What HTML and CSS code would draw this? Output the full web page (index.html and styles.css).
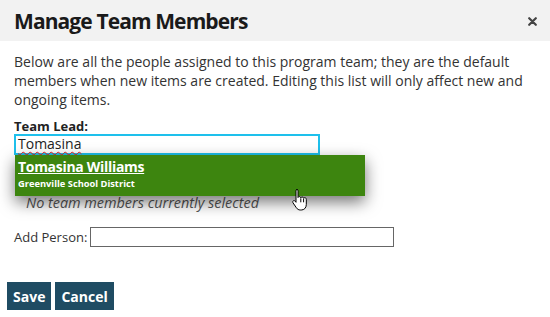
FILE: index.html
```html
<!DOCTYPE html>
<html>
	<head>
		<meta charset="UTF-8">
		<title>Manage Team Members</title>
		<link rel="stylesheet" href="styles.css">
	</head>
	<body>
		<div class="dialog">
			<div class="dialog_head">
				<h1>Manage Team Members</h1>
				<svg class="close" width="9" height="9" viewBox="0 0 9 9">
					<path d="M1.2 1.2l6.6 6.6M7.8 1.2L1.2 7.8" stroke="#444" stroke-width="2.2" stroke-linecap="round"/>
				</svg>
			</div>
			<div class="dialog_body">
				<p class="intro">Below are all the people assigned to this program team; they are the default members when new items are created. Editing this list will only affect new and ongoing items.</p>
				<div class="lead_box">
					<label class="lead_label">Team Lead:</label>
					<div class="lead_input"><span class="misspelled">Tomasina</span></div>
					<div class="suggest">
						<a class="suggest_name">Tomasina Williams</a>
						<span class="suggest_org">Greenville School District</span>
					</div>
					<svg class="cursor" width="16" height="24" viewBox="0 0 16 24">
						<path d="M4.5 1.5c1 0 1.5.7 1.5 1.6v6.4c.3-.6.8-.9 1.4-.9.8 0 1.3.5 1.4 1.2.3-.5.8-.8 1.4-.8.8 0 1.3.6 1.4 1.3.3-.4.7-.6 1.2-.6.9 0 1.5.7 1.5 1.7v5.2c0 3.2-2.1 5.4-5 5.4H8.4c-1.8 0-3-.8-4-2.2L1 14.8c-.5-.8-.3-1.6.3-2 .6-.4 1.4-.2 1.9.4l.8 1.1V3.1c0-.9.5-1.6 1.5-1.6z" fill="#fff" stroke="#000" stroke-width="1"/>
						<path d="M8.8 10.3v4M11.6 10.8v3.5" stroke="#000" stroke-width="1"/>
					</svg>
				</div>
				<p class="empty">No team members currently selected</p>
				<div class="add_box">
					<label for="add">Add Person:</label>
					<input type="text" id="add" class="add_input">
				</div>
				<div class="buttons">
					<button class="button">Save</button>
					<button class="button">Cancel</button>
				</div>
			</div>
		</div>
	</body>
</html>
```

FILE: styles.css
```css
body {
	margin: 0;
	font-family: "Open Sans", "DejaVu Sans", sans-serif;
	color: #333;
	background: #fff;
}

.dialog_head {
	display: flex;
	align-items: center;
	justify-content: space-between;
	height: 41px;
	padding: 0 13px 0 14px;
	background-color: #f2f2f2;
}

.dialog_head h1 {
	margin: 0;
	font-size: 21px;
	font-weight: bold;
	letter-spacing: -0.9px;
	color: #1a1a1a;
}

.close {
	display: block;
	margin-top: 1px;
}

.dialog_body {
	padding: 11px 14px 0 14px;
}

.intro {
	margin: 0;
	font-size: 14px;
	line-height: 19px;
}

.lead_box {
	position: relative;
	margin-top: 9px;
}

.lead_label {
	display: block;
	font-size: 13px;
	font-weight: bold;
	color: #222;
	line-height: 16px;
}

.lead_input {
	box-sizing: border-box;
	width: 306px;
	height: 21px;
	padding: 0 2px;
	border: 2px solid #1ec0ec;
	font-size: 14px;
	line-height: 16px;
	color: #222;
}

.misspelled {
	text-decoration-line: underline;
	text-decoration-style: wavy;
	text-decoration-color: #e02020;
	text-decoration-thickness: 1px;
	text-underline-offset: 2px;
}

.suggest {
	position: absolute;
	top: 37px;
	left: 1px;
	width: 350px;
	height: 41px;
	padding: 2px 3px;
	box-sizing: border-box;
	background-color: #3d850f;
	color: #fff;
	box-shadow: 0 6px 16px rgba(0, 0, 0, 0.55);
	z-index: 2;
}

.suggest_name {
	display: block;
	font-size: 14px;
	font-weight: bold;
	letter-spacing: -0.3px;
	line-height: 20px;
	text-decoration: underline;
}

.suggest_org {
	display: block;
	font-size: 9.3px;
	font-weight: bold;
	line-height: 14px;
}

.cursor {
	position: absolute;
	top: 70px;
	left: 278px;
	z-index: 3;
}

.empty {
	margin: 38px 0 0 12px;
	font-size: 14.4px;
	font-style: italic;
	color: #555;
	line-height: 19px;
}

.add_box {
	display: flex;
	align-items: center;
	margin-top: 15px;
	font-size: 13px;
	color: #333;
}

.add_box label {
	margin-right: 3px;
}

.add_input {
	box-sizing: border-box;
	width: 304px;
	height: 20px;
	padding: 2px;
	border: 1px solid #666;
	outline: none;
}

.buttons {
	display: flex;
	gap: 4px;
	margin: 35px 0 0 -7px;
}

.button {
	height: 28px;
	padding: 0 6px;
	border: none;
	background-color: #1f4c63;
	color: #fff;
	font-family: "Open Sans", "DejaVu Sans", sans-serif;
	font-size: 14px;
	font-weight: bold;
}
```
